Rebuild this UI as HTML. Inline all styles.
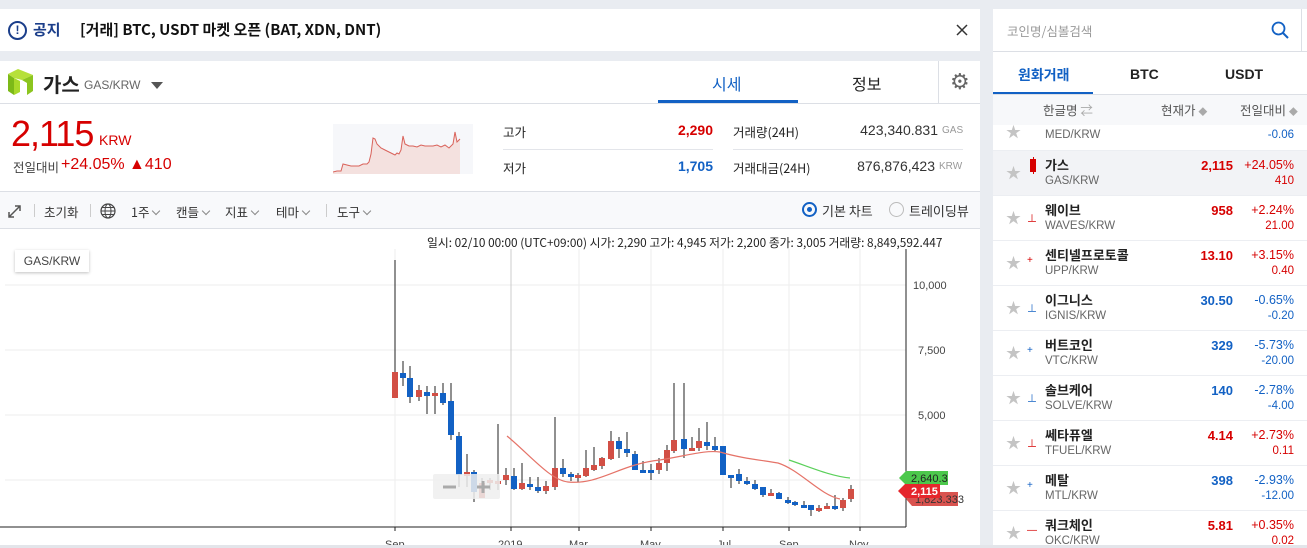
<!DOCTYPE html>
<html style="overflow:hidden"><head><meta charset="utf-8"><style>
*{margin:0;padding:0;box-sizing:border-box}
html,body{width:1307px;height:548px;overflow:hidden}
body{background:#e9ecf1;font-family:"Liberation Sans","Noto Sans CJK KR",sans-serif;position:relative;color:#222}
.abs{position:absolute}
.w{background:#fff}
.kr{font-family:"Noto Sans CJK KR","Liberation Sans",sans-serif}
.row{position:absolute;left:993px;width:314px;height:45px;border-bottom:1px solid #eceef2;background:#fff}
.row .st{position:absolute;left:13px;top:11px;color:#c4c4c4;font-size:15px}
.row .nm{position:absolute;left:52px;top:4px;font-size:13px;font-weight:bold;color:#222}
.row .sy{position:absolute;left:52px;top:24px;font-size:11.5px;color:#666}
.row .pr{position:absolute;right:74px;top:7px;font-size:13px;font-weight:bold}
.row .pc{position:absolute;right:13px;top:7px;font-size:12.5px}
.row .ch{position:absolute;right:13px;top:24px;font-size:11.5px}
.r{color:#d60000}.b{color:#1261c4}
.tb{position:absolute;top:202px;font-size:12.5px;color:#333}
.sep{position:absolute;top:204px;width:1px;height:13px;background:#ccc}
.chev{display:inline-block;width:6px;height:6px;border-right:1px solid #888;border-bottom:1px solid #888;transform:rotate(45deg);margin-left:4px;position:relative;top:-3px}
</style></head><body>
<div class="abs w" style="left:0;top:9px;width:980px;height:42px"></div>
<div class="abs" style="left:8px;top:21px;width:19px;height:19px;border:2px solid #1b3e8a;border-radius:50%;color:#1b3e8a;font-weight:bold;font-size:12px;line-height:15px;text-align:center">!</div>
<div class="abs kr" style="left:33px;top:19px;font-size:15px;font-weight:bold;color:#1b3e8a">공지</div>
<div class="abs kr" style="left:80px;top:19px;font-size:15px;font-weight:bold;color:#111">[거래] BTC, USDT 마켓 오픈 (BAT, XDN, DNT)</div>
<svg class="abs" style="left:956px;top:24px" width="12" height="12"><path d="M1,1L11,11M11,1L1,11" stroke="#333" stroke-width="1.5"/></svg>

<div class="abs w" style="left:0;top:61px;width:980px;height:487px"></div>
<div class="abs" style="left:0;top:103px;width:980px;height:1px;background:#dcdfe5"></div>
<svg class="abs" style="left:8px;top:69px" width="25" height="27"><polygon points="0,5 6,9 6,26 0,22" fill="#7cb918"/><polygon points="6,9 6,26 12,23 12,12" fill="#a8d92a"/><polygon points="0,5 10,0 25,6 14,11 6,9" fill="#b6e03a"/><polygon points="14,11 25,6 25,22 19,26 19,14" fill="#8cc51f"/></svg>
<div class="abs kr" style="left:43px;top:69px;font-size:20px;font-weight:bold;color:#222">가스</div>
<div class="abs" style="left:84px;top:78px;font-size:12px;color:#666">GAS/KRW</div>
<div class="abs" style="left:151px;top:82px;width:0;height:0;border-left:6px solid transparent;border-right:6px solid transparent;border-top:7px solid #555"></div>
<div class="abs kr" style="left:712px;top:71px;font-size:16px;color:#1261c4">시세</div>
<div class="abs" style="left:658px;top:100px;width:140px;height:3px;background:#1261c4"></div>
<div class="abs kr" style="left:852px;top:71px;font-size:16px;color:#222">정보</div>
<div class="abs" style="left:938px;top:61px;width:1px;height:42px;background:#dcdfe5"></div>
<div class="abs" style="left:950px;top:69px;font-size:22px;color:#666">⚙</div>

<div class="abs" style="left:11px;top:113px;font-size:36px;color:#d60000;letter-spacing:-1px">2,115</div>
<div class="abs" style="left:99px;top:132px;font-size:14px;color:#d60000">KRW</div>
<div class="abs kr" style="left:13px;top:157px;font-size:12.5px;color:#444">전일대비</div>
<div class="abs" style="left:61px;top:156px;font-size:16px;color:#d60000">+24.05% ▲410</div>
<svg class="abs" style="left:333px;top:124px" width="140" height="50"><rect width="140" height="50" fill="#f6f7fa"/><path d="M0,48 4,47 8,47 10,40 14,41 18,42 22,42 26,42 30,40 34,40 36,38 38,30 40,14 42,15 44,20 48,24 52,26 56,28 60,30 62,31 64,29 66,30 68,26 70,12 72,20 76,22 80,22 84,23 88,21 92,22 96,22 100,22 104,21 108,23 112,21 116,24 120,20 122,8 124,18 126,16 127,15 127,50 0,50Z" fill="#f4e1df"/><path d="M0,48 4,47 8,47 10,40 14,41 18,42 22,42 26,42 30,40 34,40 36,38 38,30 40,14 42,15 44,20 48,24 52,26 56,28 60,30 62,31 64,29 66,30 68,26 70,12 72,20 76,22 80,22 84,23 88,21 92,22 96,22 100,22 104,21 108,23 112,21 116,24 120,20 122,8 124,18 126,16 127,15" fill="none" stroke="#d9625a" stroke-width="1"/></svg>

<div class="abs kr" style="left:503px;top:122px;font-size:12.5px">고가</div>
<div class="abs" style="left:613px;top:122px;width:100px;text-align:right;font-size:14px;font-weight:bold;color:#d60000">2,290</div>
<div class="abs" style="left:503px;top:149px;width:210px;height:1px;background:#e3e5ea"></div>
<div class="abs kr" style="left:503px;top:158px;font-size:12.5px">저가</div>
<div class="abs" style="left:613px;top:158px;width:100px;text-align:right;font-size:14px;font-weight:bold;color:#1261c4">1,705</div>
<div class="abs kr" style="left:733px;top:122px;font-size:12.5px">거래량(24H)</div>
<div class="abs" style="left:820px;top:122px;width:118px;text-align:right;font-size:14px;color:#333">423,340.831</div>
<div class="abs" style="left:942px;top:125px;font-size:10px;color:#999">GAS</div>
<div class="abs" style="left:733px;top:149px;width:230px;height:1px;background:#e3e5ea"></div>
<div class="abs kr" style="left:733px;top:158px;font-size:12.5px">거래대금(24H)</div>
<div class="abs" style="left:820px;top:158px;width:115px;text-align:right;font-size:14px;color:#333">876,876,423</div>
<div class="abs" style="left:939px;top:161px;font-size:10px;color:#999">KRW</div>

<div class="abs" style="left:0;top:191px;width:980px;height:38px;background:#f8f9fb;border-top:1px solid #dcdfe5;border-bottom:1px solid #dcdfe5"></div>
<svg class="abs" style="left:8px;top:205px" width="13" height="13"><path d="M1,12L12,1M7,1H12V6M1,7V12H6" fill="none" stroke="#555" stroke-width="1.5"/></svg>
<div class="sep" style="left:34px"></div>
<div class="tb kr" style="left:44px">초기화</div>
<div class="sep" style="left:90px"></div>
<svg class="abs" style="left:100px;top:203px" width="16" height="16"><circle cx="8" cy="8" r="7" fill="none" stroke="#444" stroke-width="1.2"/><ellipse cx="8" cy="8" rx="3" ry="7" fill="none" stroke="#444"/><path d="M1,8H15M2,4.5H14M2,11.5H14" stroke="#444"/></svg>
<div class="tb kr" style="left:131px">1주<span class="chev"></span></div>
<div class="tb kr" style="left:176px">캔들<span class="chev"></span></div>
<div class="tb kr" style="left:225px">지표<span class="chev"></span></div>
<div class="tb kr" style="left:276px">테마<span class="chev"></span></div>
<div class="sep" style="left:326px"></div>
<div class="tb kr" style="left:337px">도구<span class="chev"></span></div>
<div class="abs" style="left:802px;top:202px;width:15px;height:15px;border:2px solid #1261c4;border-radius:50%"><div style="margin:3px;width:5px;height:5px;border-radius:50%;background:#1261c4"></div></div>
<div class="abs kr" style="left:822px;top:201px;font-size:13px;color:#333">기본 차트</div>
<div class="abs" style="left:889px;top:202px;width:15px;height:15px;border:1.5px solid #bbb;border-radius:50%"></div>
<div class="abs kr" style="left:909px;top:201px;font-size:13px;color:#333">트레이딩뷰</div>

<div class="abs kr" style="left:427px;top:234px;font-size:11.8px;color:#222;letter-spacing:0">일시: 02/10 00:00 (UTC+09:00) 시가: 2,290 고가: 4,945 저가: 2,200 종가: 3,005 거래량: 8,849,592.447</div>
<div class="abs" style="left:15px;top:250px;width:74px;height:22px;background:#fff;box-shadow:0 1px 3px rgba(0,0,0,.25);font-size:12px;color:#444;text-align:center;line-height:22px">GAS/KRW</div>
<svg class="abs" style="left:0;top:229px" width="980" height="319">
<g stroke="#eee" stroke-width="1">
<line x1="5" y1="56" x2="906" y2="56"/><line x1="5" y1="121" x2="906" y2="121"/><line x1="5" y1="186" x2="906" y2="186"/><line x1="5" y1="251" x2="906" y2="251"/>
<line x1="395" y1="20" x2="395" y2="298"/><line x1="579" y1="20" x2="579" y2="298"/><line x1="651" y1="20" x2="651" y2="298"/><line x1="723" y1="20" x2="723" y2="298"/><line x1="789" y1="20" x2="789" y2="298"/><line x1="860" y1="20" x2="860" y2="298"/>
</g>
<line x1="511" y1="20" x2="511" y2="298" stroke="#ccc"/>
<line x1="906" y1="20" x2="906" y2="298" stroke="#222"/>
<line x1="0" y1="298" x2="906" y2="298" stroke="#222"/>
<g stroke="#222"><line x1="395" y1="298" x2="395" y2="302"/><line x1="511" y1="298" x2="511" y2="302"/><line x1="579" y1="298" x2="579" y2="302"/><line x1="651" y1="298" x2="651" y2="302"/><line x1="723" y1="298" x2="723" y2="302"/><line x1="789" y1="298" x2="789" y2="302"/><line x1="860" y1="298" x2="860" y2="302"/></g>
<g font-size="11" fill="#444" font-family="Liberation Sans"><text x="913" y="60">10,000</text><text x="918" y="125">7,500</text><text x="918" y="190">5,000</text>
<text x="385" y="319">Sep</text><text x="498" y="319">2019</text><text x="569" y="319">Mar</text><text x="640" y="319">May</text><text x="717" y="319">Jul</text><text x="779" y="319">Sep</text><text x="849" y="319">Nov</text></g>
<g transform="translate(0,-229)" stroke="#222" stroke-width="1">
<path d="M395,260V398M403,361V386M410,366V403M419,385V401M427,386V414M435,386V414M443,383V405M451,383V440M459,432V487M467,454V487M474,470V502M482,478V498M490,478V490M498,424V490M506,468V485M514,468V490M522,463V490M530,477V490M538,477V493M546,481V494M555,417V490M563,459V477M571,472V481M578,473V482M586,450V477M594,447V471M602,457V469M611,431V460M619,437V458M627,432V457M635,451V470M643,461V473M651,464V480M659,458V474M667,445V471M674,383V453M684,383V458M692,437V451M699,428V451M707,422V450M715,437V451M723,446V475M731,475V488M739,469V484M747,477V485M755,480V490M763,487V497M771,489V496M779,492V499M788,497V504M795,501V506M804,501V508M811,505V516M819,505V512M827,503V509M835,495V510M843,498V511M851,485V502"/>
</g>
<g transform="translate(0,-229)">
<g fill="#d24f45"><rect x="392" y="372" width="6" height="26"/><rect x="416" y="390" width="6" height="7"/><rect x="432" y="393" width="6" height="3"/><rect x="464" y="472" width="6" height="4"/><rect x="479" y="483" width="6" height="15"/><rect x="487" y="480" width="6" height="3"/><rect x="495" y="481" width="6" height="3"/><rect x="503" y="475" width="6" height="5"/><rect x="519" y="483" width="6" height="6"/><rect x="543" y="486" width="6" height="5"/><rect x="552" y="468" width="6" height="19"/><rect x="575" y="475" width="6" height="3"/><rect x="583" y="468" width="6" height="8"/><rect x="591" y="465" width="6" height="5"/><rect x="599" y="458" width="6" height="8"/><rect x="608" y="441" width="6" height="18"/><rect x="656" y="463" width="6" height="7"/><rect x="664" y="450" width="6" height="13"/><rect x="671" y="440" width="6" height="11"/><rect x="689" y="448" width="6" height="3"/><rect x="696" y="441" width="6" height="7"/><rect x="768" y="493" width="6" height="3"/><rect x="816" y="508" width="6" height="3"/><rect x="824" y="506" width="6" height="3"/><rect x="840" y="500" width="6" height="8"/><rect x="848" y="489" width="6" height="10"/></g>
<g fill="#1261c4"><rect x="400" y="373" width="6" height="5"/><rect x="407" y="378" width="6" height="19"/><rect x="424" y="392" width="6" height="4"/><rect x="440" y="393" width="6" height="10"/><rect x="448" y="401" width="6" height="34"/><rect x="456" y="436" width="6" height="39"/><rect x="471" y="472" width="6" height="20"/><rect x="511" y="476" width="6" height="13"/><rect x="527" y="484" width="6" height="3"/><rect x="535" y="487" width="6" height="4"/><rect x="560" y="468" width="6" height="6"/><rect x="568" y="474" width="6" height="3"/><rect x="616" y="441" width="6" height="8"/><rect x="624" y="449" width="6" height="4"/><rect x="632" y="454" width="6" height="16"/><rect x="640" y="470" width="6" height="3"/><rect x="648" y="470" width="6" height="3"/><rect x="681" y="439" width="6" height="10"/><rect x="704" y="442" width="6" height="4"/><rect x="712" y="446" width="6" height="4"/><rect x="720" y="446" width="6" height="29"/><rect x="728" y="475" width="6" height="3"/><rect x="736" y="474" width="6" height="7"/><rect x="744" y="481" width="6" height="3"/><rect x="752" y="484" width="6" height="5"/><rect x="760" y="487" width="6" height="8"/><rect x="776" y="493" width="6" height="6"/><rect x="785" y="500" width="6" height="3"/><rect x="792" y="502" width="6" height="3"/><rect x="801" y="505" width="6" height="3"/><rect x="808" y="505" width="6" height="5"/><rect x="832" y="506" width="6" height="3"/></g>
<path d="M507,436 C530,455 550,480 568,482 C600,485 620,464 660,460 C690,455 705,450 720,452 C740,458 760,460 778,463 C800,470 820,495 840,499" fill="none" stroke="#e57368" stroke-width="1.2"/>
<path d="M789,460 C810,467 830,476 850,478" fill="none" stroke="#5bd05b" stroke-width="1.2"/>
<rect x="433" y="474" width="67" height="25" fill="#eee" opacity="0.85" rx="2"/>
<path d="M443,487H456M477,487H490M483,481V493" stroke="#aaa" stroke-width="3"/>
<path d="M906,499 L912,492 H958 V506 H912Z" fill="#d9534f"/>
<text x="915" y="503" font-size="11" fill="#333" font-family="Liberation Sans">1,823.333</text>
<path d="M899,478 L906,471 H948 V485 H906Z" fill="#4cc84c"/>
<text x="911" y="482" font-size="11" fill="#222" font-family="Liberation Sans">2,640.3</text>
<path d="M898,491 L905,484 H940 V498 H905Z" fill="#e5262c"/>
<text x="911" y="495" font-size="11" font-weight="bold" fill="#fff" font-family="Liberation Sans">2,115</text>
</g>
<rect x="0" y="316" width="980" height="3" fill="#e3e5ea"/>
</svg>

<div class="abs w" style="left:993px;top:9px;width:314px;height:539px"></div>
<div class="abs" style="left:1301px;top:9px;width:1px;height:42px;background:#dcdfe5"></div>
<div class="abs kr" style="left:1007px;top:21px;font-size:12.5px;color:#999">코인명/심볼검색</div>
<svg class="abs" style="left:1271px;top:21px" width="18" height="18"><circle cx="7.5" cy="7.5" r="6" fill="none" stroke="#1261c4" stroke-width="1.8"/><line x1="12" y1="12" x2="17" y2="17" stroke="#1261c4" stroke-width="2"/></svg>
<div class="abs" style="left:993px;top:51px;width:314px;height:1px;background:#dcdfe5"></div>
<div class="abs kr" style="left:1018px;top:65px;font-size:14px;font-weight:bold;color:#1261c4">원화거래</div>
<div class="abs" style="left:1130px;top:66px;font-size:14px;font-weight:bold">BTC</div>
<div class="abs" style="left:1225px;top:66px;font-size:14px;font-weight:bold">USDT</div>
<div class="abs" style="left:993px;top:92px;width:100px;height:3px;background:#1261c4"></div>
<div class="abs" style="left:993px;top:94px;width:314px;height:31px;background:#f7f8fa;border-top:1px solid #dcdfe5"></div>
<div class="abs kr" style="left:1043px;top:100px;font-size:12.5px;color:#555">한글명 <span style="color:#aaa">⇄</span></div>
<div class="abs kr" style="left:1161px;top:100px;font-size:12.5px;color:#555">현재가 <span style="color:#aaa;font-size:9px">◆</span></div>
<div class="abs kr" style="left:1240px;top:100px;font-size:12.5px;color:#555">전일대비 <span style="color:#aaa;font-size:9px">◆</span></div>

<div class="row" style="top:125px;height:26px"><div class="st" style="top:-4px">★</div><div class="sy" style="top:4px">MED/KRW</div><div class="ch b" style="top:4px">-0.06</div></div>
<div class="row" style="top:151px;background:#f2f3f6"><div class="st">★</div><div style="position:absolute;left:37px;top:8px;width:6px;height:13px;background:#d60000"></div><div style="position:absolute;left:39.5px;top:6px;width:1px;height:17px;background:#d60000"></div><div class="nm kr">가스</div><div class="sy">GAS/KRW</div><div class="pr r">2,115</div><div class="pc r">+24.05%</div><div class="ch r">410</div></div>
<div class="row" style="top:196px"><div class="st">★</div><div style="position:absolute;left:34px;top:14px;color:#d60000;font-size:10px">⊥</div><div class="nm kr">웨이브</div><div class="sy">WAVES/KRW</div><div class="pr r">958</div><div class="pc r">+2.24%</div><div class="ch r">21.00</div></div>
<div class="row" style="top:241px"><div class="st">★</div><div style="position:absolute;left:34px;top:14px;color:#d60000;font-size:10px">+</div><div class="nm kr">센티넬프로토콜</div><div class="sy">UPP/KRW</div><div class="pr r">13.10</div><div class="pc r">+3.15%</div><div class="ch r">0.40</div></div>
<div class="row" style="top:286px"><div class="st">★</div><div style="position:absolute;left:34px;top:14px;color:#1261c4;font-size:10px">⊥</div><div class="nm kr">이그니스</div><div class="sy">IGNIS/KRW</div><div class="pr b">30.50</div><div class="pc b">-0.65%</div><div class="ch b">-0.20</div></div>
<div class="row" style="top:331px"><div class="st">★</div><div style="position:absolute;left:34px;top:14px;color:#1261c4;font-size:10px">+</div><div class="nm kr">버트코인</div><div class="sy">VTC/KRW</div><div class="pr b">329</div><div class="pc b">-5.73%</div><div class="ch b">-20.00</div></div>
<div class="row" style="top:376px"><div class="st">★</div><div style="position:absolute;left:34px;top:14px;color:#1261c4;font-size:10px">⊥</div><div class="nm kr">솔브케어</div><div class="sy">SOLVE/KRW</div><div class="pr b">140</div><div class="pc b">-2.78%</div><div class="ch b">-4.00</div></div>
<div class="row" style="top:421px"><div class="st">★</div><div style="position:absolute;left:34px;top:14px;color:#d60000;font-size:10px">⊥</div><div class="nm kr">쎄타퓨엘</div><div class="sy">TFUEL/KRW</div><div class="pr r">4.14</div><div class="pc r">+2.73%</div><div class="ch r">0.11</div></div>
<div class="row" style="top:466px"><div class="st">★</div><div style="position:absolute;left:34px;top:14px;color:#1261c4;font-size:10px">+</div><div class="nm kr">메탈</div><div class="sy">MTL/KRW</div><div class="pr b">398</div><div class="pc b">-2.93%</div><div class="ch b">-12.00</div></div>
<div class="row" style="top:511px"><div class="st">★</div><div style="position:absolute;left:34px;top:14px;color:#d60000;font-size:10px">—</div><div class="nm kr">쿼크체인</div><div class="sy">OKC/KRW</div><div class="pr r">5.81</div><div class="pc r">+0.35%</div><div class="ch r">0.02</div></div>
<div class="abs" style="left:980px;top:545px;width:327px;height:3px;background:#e3e5ea"></div>
</body></html>
